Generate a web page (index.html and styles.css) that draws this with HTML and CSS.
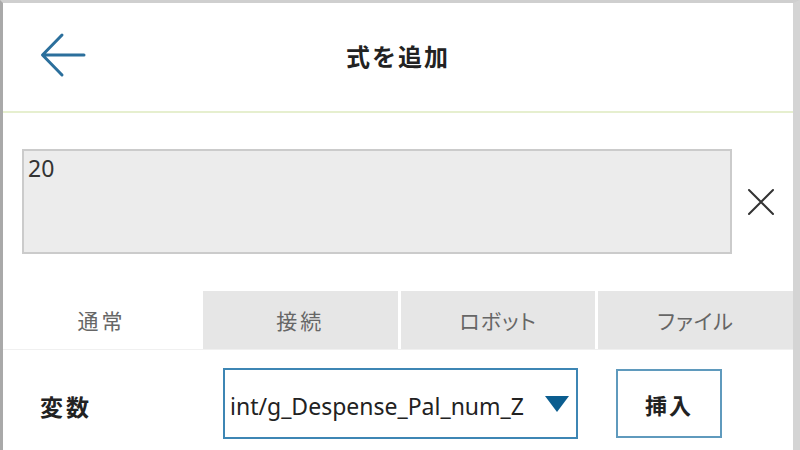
FILE: index.html
```html
<!DOCTYPE html>
<html lang="ja">
	<head>
		<meta charset="UTF-8" />
		<meta name="viewport" content="width=device-width, initial-scale=1.0" />
		<title>式を追加</title>
		<link rel="stylesheet" href="styles.css">
	</head>
	<body>
		<div class="frame">
			<header class="header">
				<button class="back" aria-label="戻る">
					<svg width="46" height="46" viewBox="0 0 46 46">
						<path d="M44 23 H3 M22 3 L2.5 23 L22 43" fill="none" stroke="#2b6f9c" stroke-width="3" stroke-linecap="round" stroke-linejoin="round" />
					</svg>
				</button>
				<h1 class="title">式を追加</h1>
			</header>

			<div class="expr-row">
				<div class="expr">20</div>
				<button class="clear" aria-label="クリア">
					<svg width="28" height="28" viewBox="0 0 28 28">
						<path d="M2 2 L26 26 M26 2 L2 26" stroke="#333" stroke-width="2" stroke-linecap="round" />
					</svg>
				</button>
			</div>

			<div class="tabs">
				<div class="tab active">通常</div>
				<div class="tab">接続</div>
				<div class="tab kana">ロボット</div>
				<div class="tab kana">ファイル</div>
			</div>

			<div class="var-row">
				<div class="var-label">変数</div>
				<div class="select">
					<span class="select-text">int/g_Despense_Pal_num_Z</span>
					<svg class="caret" width="24" height="16" viewBox="0 0 24 16">
						<path d="M0 0 H24 L12 16 Z" fill="#0b5d8f" />
					</svg>
				</div>
				<button class="insert">挿入</button>
			</div>
		</div>
	</body>
</html>
```

FILE: styles.css
```css
html,
body {
	margin: 0;
	height: 100%;
	overflow: hidden;
}
body {
	font-family: "Noto Sans", "Noto Sans CJK JP", sans-serif;
	color: #222;
	background-color: #fff;
}
button {
	font-family: inherit;
	background: none;
	border: none;
	padding: 0;
	cursor: pointer;
}
.frame {
	height: 100%;
	box-sizing: border-box;
	border-top: 3px solid #cfcfcf;
	border-left: 3px solid #a9a9a9;
	border-right: 7px solid #d4d4d4;
}
.header {
	height: 108px;
	display: flex;
	align-items: center;
	position: relative;
	border-bottom: 2px solid #e6efcf;
}
.back {
	margin-left: 37px;
	margin-top: -5px;
	display: flex;
}
.title {
	position: absolute;
	left: 0;
	right: 0;
	top: 40px;
	margin: 0;
	text-align: center;
	font-size: 24px;
	font-weight: bold;
	letter-spacing: 2px;
	line-height: 28px;
	pointer-events: none;
}
.expr-row {
	display: flex;
	align-items: center;
	margin-top: 36px;
	padding-left: 19px;
}
.expr {
	width: 710px;
	height: 105px;
	box-sizing: border-box;
	background-color: #ececec;
	border: 2px solid #cbcbcb;
	padding: 3px 4px;
	font-size: 23px;
	line-height: 28px;
	color: #333;
}
.clear {
	margin-left: 15px;
	display: flex;
}
.tabs {
	display: grid;
	grid-template-columns: 197px 1fr 1fr 1fr;
	column-gap: 3px;
	margin-top: 37px;
	border-bottom: 1px solid #f0f0f0;
}
.tab {
	height: 58px;
	display: flex;
	align-items: center;
	justify-content: center;
	background-color: #e6e6e6;
	color: #666;
	font-size: 21px;
	letter-spacing: 3px;
}
.tab.kana {
	font-feature-settings: "palt";
	letter-spacing: 1px;
}
.tab.active {
	background-color: #fff;
}
.var-row {
	display: flex;
	align-items: center;
	margin-top: 18px;
	padding-left: 37px;
}
.var-label {
	width: 183px;
	font-size: 23px;
	font-weight: bold;
	letter-spacing: 3px;
	margin-top: 4px;
}
.select {
	width: 355px;
	height: 71px;
	box-sizing: border-box;
	border: 2px solid #3d86b4;
	display: flex;
	align-items: center;
	justify-content: space-between;
	padding: 0 6px 0 5px;
}
.select-text {
	font-size: 23px;
	color: #222;
	margin-top: 4px;
}
.caret {
	margin-right: 1px;
	margin-top: 1px;
}
.insert {
	width: 106px;
	height: 69px;
	margin-left: 38px;
	box-sizing: border-box;
	border: 2px solid #5f9abd;
	font-size: 22px;
	font-weight: bold;
	color: #222;
	letter-spacing: 2px;
}
```
